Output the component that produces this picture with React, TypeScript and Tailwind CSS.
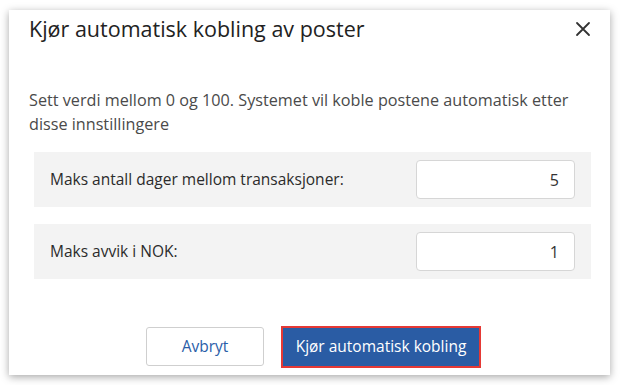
import React from "react";

export default function App() {
  return (
    <div className="w-[620px] h-[385px] bg-white pt-[10px] pl-[9px]" style={{ fontFamily: "'Open Sans', Lato, sans-serif" }}>
      <div className="w-[601px] h-[365px] bg-white shadow-[0_2px_8px_rgba(0,0,0,0.35)] flex flex-col">
        <div className="flex items-center justify-between pl-[20px] pr-[16px] pt-[6px] h-[32px]">
          <div className="text-[21.5px] text-[#222] leading-[26px]">Kjør automatisk kobling av poster</div>
          <svg width="16" height="16" viewBox="0 0 16 16" className="mr-[3px]">
            <path d="M2 2 L14 14 M14 2 L2 14" stroke="#333" strokeWidth="1.8" strokeLinecap="round" />
          </svg>
        </div>
        <div className="pl-[20px] pr-[16px] pt-[46px] text-[16.2px] leading-[24px] text-[#4a4a4a]">
          Sett verdi mellom 0 og 100. Systemet vil koble postene automatisk etter disse innstillingere
        </div>
        <div className="ml-[25px] mr-[19px] mt-[16px] flex flex-col gap-[17px]">
          <div className="h-[55px] bg-[#f3f3f3] flex items-center justify-between pl-[16px] pr-[16px]">
            <span className="text-[15.5px] font-medium text-[#2b2b2b]">Maks antall dager mellom transaksjoner:</span>
            <div className="w-[159px] h-[39px] bg-white border border-[#d6d6d6] rounded-[4px] flex items-center justify-end pr-[15px] text-[16px] text-[#333]">5</div>
          </div>
          <div className="h-[55px] bg-[#f3f3f3] flex items-center justify-between pl-[16px] pr-[16px]">
            <span className="text-[15.5px] font-medium text-[#2b2b2b]">Maks avvik i NOK:</span>
            <div className="w-[159px] h-[39px] bg-white border border-[#d6d6d6] rounded-[4px] flex items-center justify-end pr-[15px] text-[16px] text-[#333]">1</div>
          </div>
        </div>
        <div className="flex justify-center gap-[17px] mt-[48px] pl-[8px]">
          <button className="w-[118px] h-[39px] border border-[#cfcfcf] rounded-[3px] bg-white text-[15.5px] text-[#2a5da8] font-medium">Avbryt</button>
          <button className="w-[200px] h-[42px] -mt-[1px] bg-[#2a5ca4] border-2 border-[#e53935] text-[15.5px] text-white font-medium">Kjør automatisk kobling</button>
        </div>
      </div>
    </div>
  );
}
